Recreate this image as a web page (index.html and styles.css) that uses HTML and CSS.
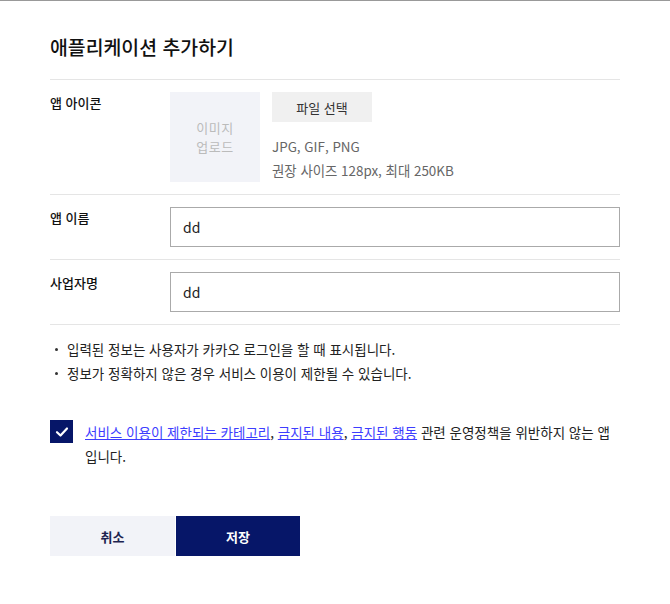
FILE: index.html
```html
<!DOCTYPE html>
<html lang="ko">
<head>
<meta charset="utf-8">
<title>애플리케이션 추가하기</title>
<link rel="stylesheet" href="styles.css">
</head>
<body>
<div class="page">
  <h2 class="title">애플리케이션 추가하기</h2>
  <div class="row row-icon">
    <div class="label">앱 아이콘</div>
    <div class="field icon-field">
      <div class="icon-box">이미지<br>업로드</div>
      <div class="icon-info">
        <button class="file-btn" type="button">파일 선택</button>
        <p class="hint">JPG, GIF, PNG</p>
        <p class="hint">권장 사이즈 128px, 최대 250KB</p>
      </div>
    </div>
  </div>
  <div class="row">
    <div class="label">앱 이름</div>
    <div class="field"><input class="text-input" type="text" value="dd"></div>
  </div>
  <div class="row">
    <div class="label">사업자명</div>
    <div class="field"><input class="text-input" type="text" value="dd"></div>
  </div>
  <ul class="notes">
    <li>입력된 정보는 사용자가 카카오 로그인을 할 때 표시됩니다.</li>
    <li>정보가 정확하지 않은 경우 서비스 이용이 제한될 수 있습니다.</li>
  </ul>
  <div class="agree">
    <span class="check"><svg width="14" height="12" viewBox="0 0 14 12"><path d="M2 6.2 L5.5 9.5 L12 2.5" fill="none" stroke="#fff" stroke-width="2.2" stroke-linecap="round" stroke-linejoin="round"/></svg></span>
    <p class="agree-text"><a href="#">서비스 이용이 제한되는 카테고리</a>, <a href="#">금지된 내용</a>, <a href="#">금지된 행동</a> 관련 운영정책을 위반하지 않는 앱입니다.</p>
  </div>
  <div class="actions">
    <button class="btn btn-cancel" type="button">취소</button>
    <button class="btn btn-save" type="button">저장</button>
  </div>
</div>
</body>
</html>
```
FILE: styles.css
```css
* { box-sizing: border-box; }
html, body { margin: 0; padding: 0; background: #fff; }
body {
  font-family: "Noto Sans CJK KR", "Noto Sans", sans-serif;
  color: #222;
  border-top: 1px solid #999;
}
.page {
  width: 570px;
  margin-left: 50px;
  padding-top: 30px;
}
.title {
  margin: 0;
  font-size: 19.4px;
  font-weight: 500;
  line-height: 32px;
  color: #111;
  padding-bottom: 16px;
  border-bottom: 1px solid #e5e5e5;
}
.row {
  display: flex;
  padding: 12px 0;
  border-bottom: 1px solid #e5e5e5;
}
.label {
  width: 120px;
  flex: none;
  font-size: 13px;
  font-weight: 500;
  line-height: 22px;
  color: #111;
}
.field { flex: 1; }
.icon-field { display: flex; gap: 12px; }
.icon-box {
  width: 90px;
  height: 90px;
  background: #f2f3f8;
  color: #bbbbbb;
  font-size: 13px;
  line-height: 19px;
  letter-spacing: 0.5px;
  display: flex;
  align-items: center;
  justify-content: center;
  text-align: center;
}
.icon-info { display: flex; flex-direction: column; align-items: flex-start; }
.file-btn {
  width: 100px;
  height: 30px;
  border: none;
  background: #f0f0f0;
  color: #333;
  font-family: inherit;
  font-size: 13px;
  padding: 0;
  margin-bottom: 12px;
}
.hint {
  margin: 0;
  font-size: 13.4px;
  line-height: 24px;
  color: #666;
}
.text-input {
  display: block;
  width: 100%;
  height: 40px;
  border: 1px solid #aaaaaa;
  padding: 0 12px;
  font-family: inherit;
  font-size: 14px;
  color: #222;
  outline: none;
}
.notes {
  list-style: none;
  margin: 12px 0 0;
  padding: 0;
}
.notes li {
  position: relative;
  padding-left: 17px;
  font-size: 13.5px;
  line-height: 24px;
  color: #222;
}
.notes li::before {
  content: "";
  position: absolute;
  left: 5px;
  top: 11px;
  width: 3px;
  height: 3px;
  border-radius: 50%;
  background: #333;
}
.agree {
  display: flex;
  gap: 12px;
  margin-top: 35px;
}
.check {
  flex: none;
  width: 23px;
  height: 23px;
  background: #061668;
  display: flex;
  align-items: center;
  justify-content: center;
}
.agree-text {
  margin: 0;
  padding-right: 10px;
  font-size: 13.5px;
  line-height: 24px;
  color: #222;
}
.agree-text a { color: #3d3dff; text-decoration: underline; }
.actions {
  display: flex;
  gap: 1px;
  margin-top: 48px;
}
.btn {
  height: 40px;
  border: none;
  font-family: inherit;
  font-size: 13px;
  font-weight: 700;
  padding: 0;
}
.btn-cancel { width: 125px; background: #f2f3f8; color: #1d2350; }
.btn-save { width: 124px; background: #061668; color: #fff; }
```
